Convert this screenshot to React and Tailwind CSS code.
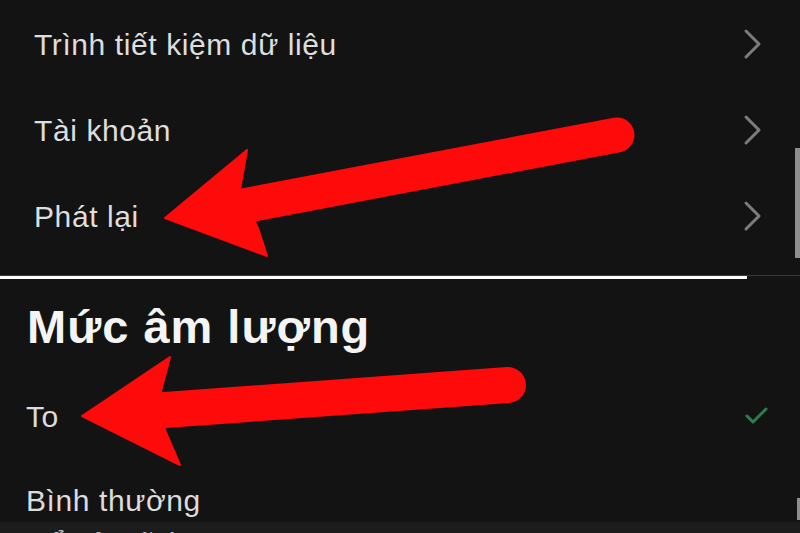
import { useState } from 'react'

const FONT = { fontFamily: '"Liberation Sans", Arial, sans-serif' }

function Chevron() {
  return (
    <svg width="22" height="32" viewBox="0 0 22 32" className="shrink-0">
      <path d="M4 3 L17 16 L4 29" fill="none" stroke="#7c7c7c" strokeWidth="3" strokeLinecap="round" strokeLinejoin="round" />
    </svg>
  )
}

function NavRow({ label }) {
  return (
    <div className="h-[86px] flex items-center justify-between pl-[34px] pr-[36px]">
      <span className="text-[30px] text-[#dedede] tracking-[0.6px]">{label}</span>
      <Chevron />
    </div>
  )
}

function OptionRow({ label, selected, h }) {
  return (
    <div className={`flex items-center justify-between pl-[26px] pr-[30px] ${h}`}>
      <span className="text-[30px] text-[#dcdcdc] tracking-[0.6px]">{label}</span>
      {selected && (
        <svg width="26" height="20" viewBox="0 0 26 20">
          <path d="M3 10 L9 16 L22 3" fill="none" stroke="#2f7d49" strokeWidth="3" strokeLinecap="round" strokeLinejoin="round" />
        </svg>
      )}
    </div>
  )
}

export default function App() {
  const [level] = useState('To')

  return (
    <div className="relative w-[800px] h-[533px] overflow-hidden bg-[#131313]" style={FONT}>

      {/* settings list */}
      <div className="flex flex-col pt-px">
        <NavRow label="Trình tiết kiệm dữ liệu" />
        <NavRow label="Tài khoản" />
        <NavRow label="Phát lại" />
      </div>

      {/* divider */}
      <div className="mt-[16px] h-px bg-[#3a3a3a]" />
      <div className="h-[3px] w-[747px] bg-white" />

      {/* volume */}
      <div className="flex flex-col">
        <h2 className="pl-[27px] pt-[24px] h-[112px] text-[47px] font-bold text-[#f4f4f4] leading-none tracking-[1px]">
          Mức âm lượng
        </h2>
        <OptionRow label="To" selected={level === 'To'} h="h-[50px]" />
        <OptionRow label="Bình thường" selected={level === 'Bình thường'} h="h-[118px]" />
      </div>

      {/* next row, cut off */}
      <div className="absolute left-0 right-0 top-[522px] h-[11px] bg-[#1c1c1c] overflow-hidden">
        <span className="block pl-[26px] pt-[7px] text-[30px] text-[#bdbdbd] leading-none tracking-[0.6px]">Để yên tĩnh</span>
      </div>

      {/* scrollbars */}
      <div className="absolute right-0 top-[148px] w-[5px] h-[110px] bg-[#8e8e8e]" />
      <div className="absolute right-0 top-[498px] w-[3px] h-[22px] bg-[#8e8e8e]" />

      {/* red arrows */}
      <svg className="absolute inset-0 pointer-events-none" width="800" height="533" viewBox="0 0 800 533">
        <g fill="#ff0a0a" stroke="#ff0a0a">
          <line x1="617" y1="135" x2="232" y2="208" strokeWidth="35" strokeLinecap="round" />
          <path d="M165 218 L247 150 L240 190 L258 228 L267 256 Z" strokeWidth="2" strokeLinejoin="round" />
          <line x1="508" y1="385" x2="165" y2="410" strokeWidth="36" strokeLinecap="round" />
          <path d="M82 416 L170 357 L160 395 L165 430 L180 465 Z" strokeWidth="2" strokeLinejoin="round" />
        </g>
      </svg>
    </div>
  )
}
